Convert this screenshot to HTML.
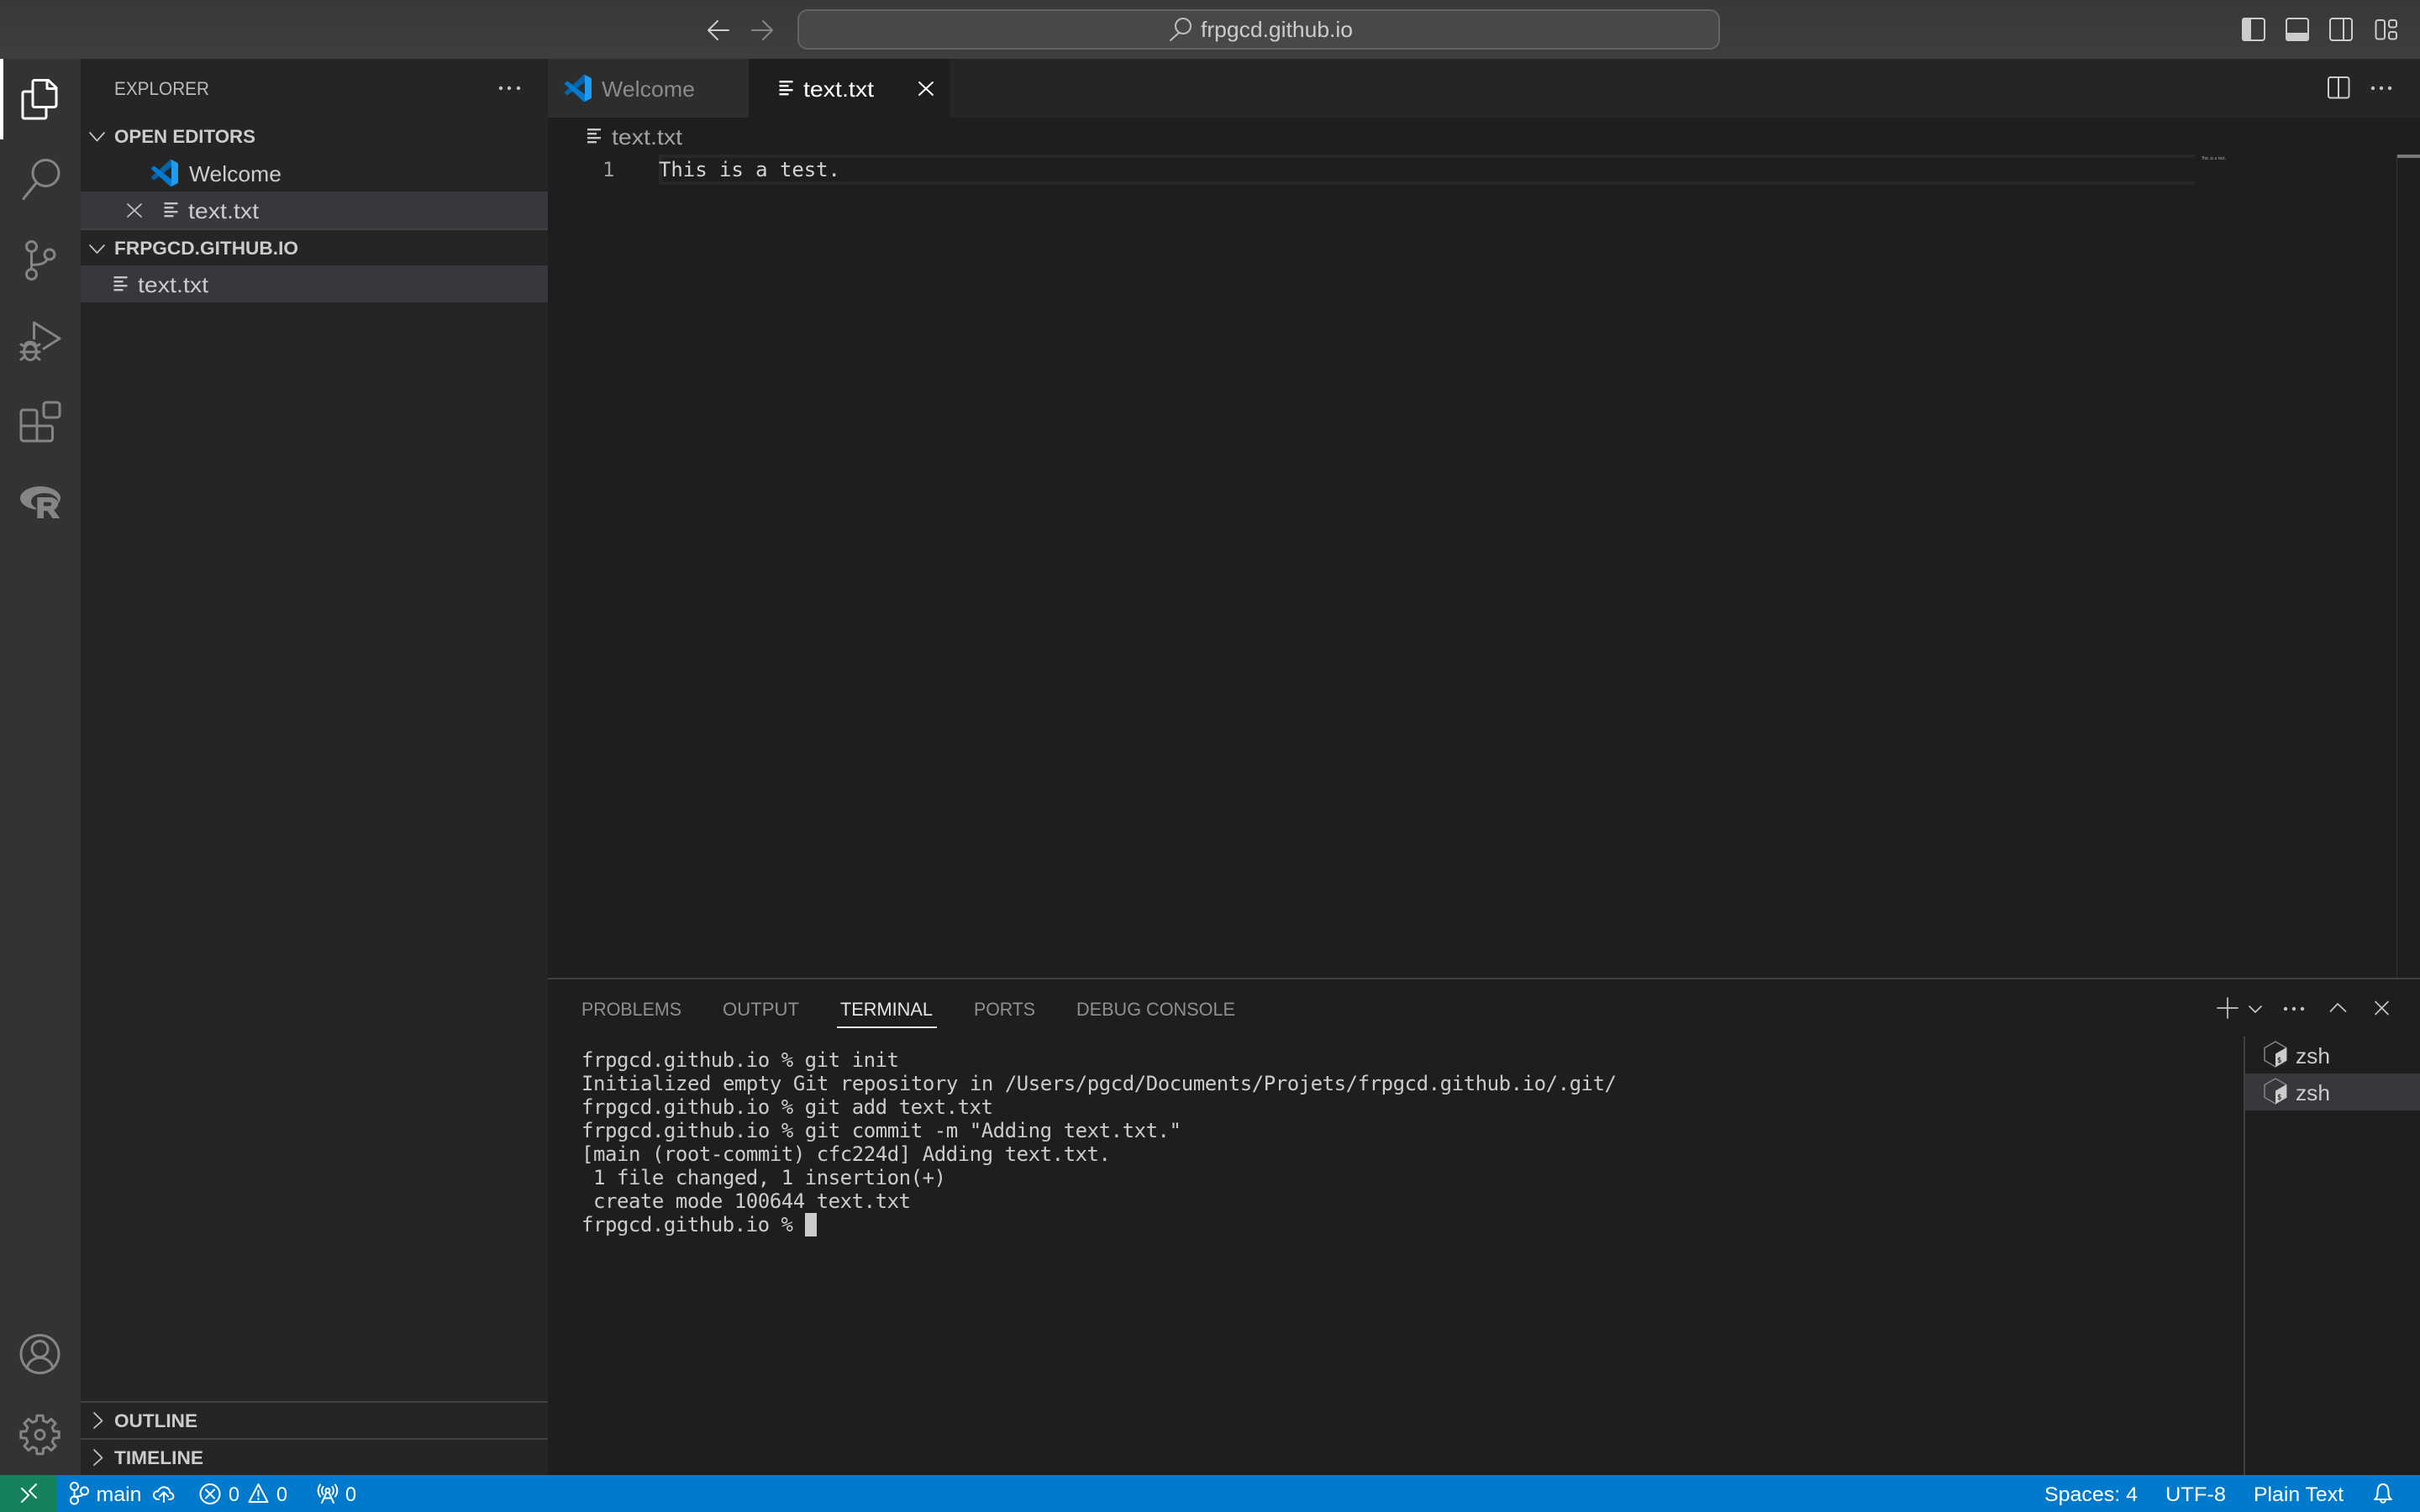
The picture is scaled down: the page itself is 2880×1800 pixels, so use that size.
<!DOCTYPE html>
<html lang="en"><head><meta charset="utf-8"><title>frpgcd.github.io</title>
<style>
html,body{margin:0;padding:0;background:#1e1e1e;width:2880px;height:1800px;overflow:hidden}
svg{display:block}
.s{font-family:"Liberation Sans",sans-serif;font-size:26px;fill:#ccc}
.b{font-family:"Liberation Sans",sans-serif;font-size:22px;font-weight:700;fill:#ccc}
.u{font-family:"Liberation Sans",sans-serif;font-size:22px;fill:#8f8f8f}
.m{font-family:"DejaVu Sans Mono","Liberation Mono",monospace;font-size:24px;fill:#ccc}
.w{font-family:"Liberation Sans",sans-serif;font-size:24px;fill:#fff}
.ic{fill:none;stroke:#858585;stroke-width:3;stroke-linecap:round;stroke-linejoin:round}
.th{fill:none;stroke:#c5c5c5;stroke-width:1.7;stroke-linecap:round;stroke-linejoin:round}
.wi{fill:none;stroke:#fff;stroke-width:2;stroke-linecap:round;stroke-linejoin:round}
</style></head><body>
<svg xmlns="http://www.w3.org/2000/svg" width="2880" height="1800" viewBox="0 0 2880 1800">
<defs>
<linearGradient id="tb" x1="0" y1="0" x2="0" y2="1"><stop offset="0" stop-color="#383838"/><stop offset="1" stop-color="#3e3e3e"/></linearGradient>
<g id="lines"><rect x="0" y="0" width="16" height="2.4"/><rect x="0" y="5" width="11" height="2.4"/><rect x="0" y="10" width="16" height="2.4"/><rect x="0" y="15" width="11" height="2.4"/></g>
<g id="vsc">
<path fill="#0065A9" d="M96.46 10.8L75.86.9a6.24 6.24 0 0 0-7.1 1.2L1.35 63.58a4.16 4.16 0 0 0 0 6.17l5.5 5a4.17 4.17 0 0 0 5.32.24L93.3 13.3c2.73-2.07 6.65-.12 6.65 3.3v-.24a6.25 6.25 0 0 0-3.54-5.56z"/>
<path fill="#007ACC" d="M96.46 89.2l-20.6 9.92a6.24 6.24 0 0 1-7.1-1.2L1.35 36.42a4.16 4.16 0 0 1 0-6.17l5.5-5a4.17 4.17 0 0 1 5.32-.24L93.3 86.7c2.73 2.07 6.65.12 6.65-3.3v.24a6.25 6.25 0 0 1-3.54 5.56z"/>
<path fill="#1F9CF0" d="M75.86 99.13a6.24 6.24 0 0 1-7.1-1.21c2.3 2.3 6.24.67 6.24-2.59V4.67c0-3.26-3.94-4.89-6.24-2.59a6.24 6.24 0 0 1 7.1-1.2L96.46 10.8A6.25 6.25 0 0 1 100 16.4v67.17a6.25 6.25 0 0 1-3.54 5.63z"/>
</g>
<g id="hex">
<polygon points="13,0 26,7.5 26,22.5 13,30 0,22.5 0,7.5" fill="none" stroke="#8a8a8a" stroke-width="1.4"/>
<polygon points="13,14.5 26,7 26,22.5 13,30" fill="#ccc"/>
<text x="15" y="25" font-family="DejaVu Sans Mono,monospace" font-size="9" font-weight="700" fill="#333">$_</text>
</g>
</defs>

<!-- regions -->
<rect width="2880" height="1800" fill="#1e1e1e"/>
<rect width="2880" height="70" fill="url(#tb)"/>
<rect y="70" width="96" height="1686" fill="#333333"/>
<rect x="96" y="70" width="556" height="1686" fill="#252526"/>
<rect x="652" y="70" width="2228" height="70" fill="#252526"/>
<rect x="652" y="70" width="239" height="70" fill="#2d2d2d"/>
<rect x="891" y="70" width="239" height="70" fill="#1e1e1e"/>
<rect y="1756" width="2880" height="44" fill="#007acc"/>
<rect y="1756" width="68" height="44" fill="#16825d"/>

<!-- title bar -->
<path d="M867 36H843M854 25L843 36L854 47" fill="none" stroke="#cfcfcf" stroke-width="2" stroke-linecap="round" stroke-linejoin="round"/>
<path d="M895 36H919M908 25L919 36L908 47" fill="none" stroke="#858585" stroke-width="2" stroke-linecap="round" stroke-linejoin="round"/>
<rect x="950" y="12" width="1096" height="46" rx="11" fill="#484848" stroke="#636363" stroke-width="2"/>
<circle cx="1408" cy="31" r="9" fill="none" stroke="#bdbdbd" stroke-width="2"/>
<path d="M1403 39L1393 48" stroke="#bdbdbd" stroke-width="2" stroke-linecap="round"/>
<text class="s" x="1429" y="44" textLength="181" lengthAdjust="spacingAndGlyphs" fill="#cfcfcf">frpgcd.github.io</text>

<g fill="none" stroke="#cccccc" stroke-width="2">
<rect x="2669" y="22" width="26" height="26" rx="3"/>
<rect x="2721" y="22" width="26" height="26" rx="3"/>
<rect x="2773" y="22" width="26" height="26" rx="3"/>
<path d="M2789 22V48"/>
<rect x="2827.5" y="24" width="10.5" height="22.5" rx="2.5"/>
<rect x="2843" y="24" width="9" height="8.5" rx="2.5"/>
<rect x="2843" y="38" width="9" height="8.5" rx="2.5"/>
<rect x="2771" y="92" width="24.5" height="24.5" rx="2.5"/>
<path d="M2783 92V116.500"/>
</g>
<path d="M2671 21h8v28h-8a3 3 0 0 1-3-3V24a3 3 0 0 1 3-3z" fill="#cccccc"/>
<path d="M2720 39h28v7a3 3 0 0 1-3 3h-22a3 3 0 0 1-3-3z" fill="#cccccc"/>

<!-- activity bar -->
<rect x="0" y="70" width="4" height="96" fill="#ffffff"/>
<g fill="none" stroke="#fff" stroke-width="3" stroke-linejoin="round">
<path d="M41 95.500H57.500L67 104.500V125a3 3 0 0 1-2.500 2.500H41a2 2 0 0 1-2-2V97.500a2 2 0 0 1 2-2z"/>
<path d="M56 95.500V105.500H67"/>
<path d="M39 109H29a2 2 0 0 0-2 2V139a2 2 0 0 0 2 2H53a2 2 0 0 0 2-2V128"/>
</g>
<circle class="ic" cx="54.500" cy="206" r="15.500"/>
<path class="ic" d="M43 218L28 236.500"/>
<g class="ic">
<circle cx="37.500" cy="293.500" r="6"/><circle cx="59" cy="303" r="6"/><circle cx="37.500" cy="326.500" r="6"/>
<path d="M37.500 299.500V320.500"/><path d="M56 308.500C54 314 48 315 37.500 315.500"/>
</g>
<g class="ic">
<path d="M40.500 403V384L71 403L52 415"/>
<ellipse cx="36" cy="419" rx="7.500" ry="9.500"/>
<path d="M30 410.500C31 406 41 406 42 410.500"/>
<path d="M25 410L30 413M47 410L42 413M25 419H47M25 428L30 424M47 428L42 424"/>
</g>
<g class="ic">
<rect x="52" y="479" width="19" height="18" rx="3"/>
<path d="M27 488H41a3 3 0 0 1 3 3V525M25 507H60a3 3 0 0 1 2.500 2.500V522a3 3 0 0 1-3 3H28a3 3 0 0 1-3-3V491a3 3 0 0 1 2-3"/>
</g>
<path fill="#858585" fill-rule="evenodd" d="M24 593a24 14 0 1 0 48 0a24 14 0 1 0-48 0zM37 597a16 10 0 1 0 32 0a16 10 0 1 0-32 0z"/>
<rect x="43" y="600" width="30" height="16" fill="#333333"/>
<text x="43" y="616" font-family="Liberation Sans,sans-serif" font-weight="700" font-size="33" fill="#858585" stroke="#858585" stroke-width="2" textLength="27" lengthAdjust="spacingAndGlyphs">R</text>
<g class="ic">
<circle cx="47.500" cy="1612" r="22.500"/>
<circle cx="47.500" cy="1606" r="9.500"/>
<path d="M32 1629C34 1620 41 1616.500 47.500 1616.500C54 1616.500 61 1620 63 1629"/>
</g>
<g class="ic" transform="translate(47.500 1708)">
<polygon points="-4.100,-16.500 -3.600,-22.700 3.600,-22.700 4.100,-16.500 8.800,-14.600 13.500,-18.600 18.600,-13.500 14.600,-8.800 16.500,-4.100 22.700,-3.600 22.700,3.600 16.500,4.100 14.600,8.800 18.600,13.500 13.500,18.600 8.800,14.600 4.100,16.500 3.600,22.700 -3.600,22.700 -4.100,16.500 -8.800,14.600 -13.500,18.600 -18.600,13.500 -14.600,8.800 -16.500,4.100 -22.700,3.600 -22.700,-3.600 -16.500,-4.100 -14.600,-8.800 -18.600,-13.500 -13.500,-18.600 -8.800,-14.600"/>
<circle r="5.500"/>
</g>

<!-- sidebar -->
<text class="u" x="136" y="113" textLength="113" lengthAdjust="spacingAndGlyphs" style="fill:#bbbbbb">EXPLORER</text>
<g fill="#c5c5c5"><circle cx="596" cy="105" r="2.200"/><circle cx="606" cy="105" r="2.200"/><circle cx="617" cy="105" r="2.200"/></g>
<rect x="96" y="228" width="556" height="44" fill="#37373d"/>
<rect x="96" y="272" width="556" height="2" fill="#414141"/>
<rect x="96" y="316" width="556" height="44" fill="#37373d"/>
<rect x="96" y="1668" width="556" height="2" fill="#414141"/>
<rect x="96" y="1712" width="556" height="2" fill="#414141"/>
<path class="th" d="M107 158L115.500 167.500L124 158"/>
<path class="th" d="M107 292L115.500 301L124 292"/>
<path class="th" d="M112 1682L121.500 1691.500L112 1700"/>
<path class="th" d="M112 1726L121.500 1735.500L112 1744"/>
<text class="b" x="136" y="170" textLength="168" lengthAdjust="spacingAndGlyphs">OPEN EDITORS</text>
<text class="b" x="136" y="303" textLength="219" lengthAdjust="spacingAndGlyphs">FRPGCD.GITHUB.IO</text>
<text class="b" x="136" y="1699" textLength="99" lengthAdjust="spacingAndGlyphs">OUTLINE</text>
<text class="b" x="136" y="1743" textLength="106" lengthAdjust="spacingAndGlyphs">TIMELINE</text>
<use href="#vsc" transform="translate(180 190) scale(.32)"/>
<text class="s" x="225" y="216" textLength="110" lengthAdjust="spacingAndGlyphs">Welcome</text>
<path class="th" d="M152 243L168 258M168 243L152 258"/>
<use href="#lines" x="195.500" y="241" fill="#c5c5c5"/>
<text class="s" x="224" y="260" textLength="84" lengthAdjust="spacingAndGlyphs">text.txt</text>
<use href="#lines" x="135.500" y="329" fill="#c5c5c5"/>
<text class="s" x="164" y="348" textLength="84" lengthAdjust="spacingAndGlyphs">text.txt</text>

<!-- tabs -->
<use href="#vsc" transform="translate(672 89) scale(.32)"/>
<text class="s" x="716" y="115" textLength="111" lengthAdjust="spacingAndGlyphs" style="fill:#8b8b8b">Welcome</text>
<use href="#lines" x="927.500" y="96" fill="#ffffff"/>
<text class="s" x="956" y="115" textLength="84" lengthAdjust="spacingAndGlyphs" style="fill:#ffffff">text.txt</text>
<path class="wi" d="M1094 98L1110 113M1110 98L1094 113"/>
<g fill="#c5c5c5"><circle cx="2824" cy="105" r="2.200"/><circle cx="2834" cy="105" r="2.200"/><circle cx="2844" cy="105" r="2.200"/></g>

<!-- breadcrumb + editor -->
<use href="#lines" x="699" y="153" fill="#c5c5c5"/>
<text class="s" x="728" y="172" textLength="84" lengthAdjust="spacingAndGlyphs" style="fill:#a3a3a3">text.txt</text>
<rect x="784" y="184" width="1828" height="4" fill="#282828"/>
<rect x="784" y="216" width="1828" height="4" fill="#282828"/>
<rect x="784" y="188" width="4" height="28" fill="#282828"/>
<text class="m" x="717" y="210" style="fill:#a0a0a0">1</text>
<text class="m" x="784" y="210" textLength="216" style="fill:#d4d4d4">This is a test.</text>
<text x="2620" y="190" font-family="DejaVu Sans Mono,monospace" font-size="5" fill="#9a9a9a" textLength="30">This is a test.</text>
<rect x="2852" y="184" width="1" height="980" fill="#333333"/>
<rect x="2853" y="184" width="27" height="4" fill="#7a7a7a"/>

<!-- panel -->
<rect x="652" y="1164" width="2228" height="2" fill="#414141"/>
<text class="u" x="692" y="1209" textLength="119" lengthAdjust="spacingAndGlyphs">PROBLEMS</text>
<text class="u" x="860" y="1209" textLength="91" lengthAdjust="spacingAndGlyphs">OUTPUT</text>
<text class="u" x="1000" y="1209" textLength="110" lengthAdjust="spacingAndGlyphs" style="fill:#e7e7e7">TERMINAL</text>
<text class="u" x="1159" y="1209" textLength="73" lengthAdjust="spacingAndGlyphs">PORTS</text>
<text class="u" x="1281" y="1209" textLength="189" lengthAdjust="spacingAndGlyphs">DEBUG CONSOLE</text>
<rect x="996" y="1222" width="119" height="2" fill="#e7e7e7"/>
<g class="m">
<text x="692" y="1270" textLength="378">frpgcd.github.io % git init</text>
<text x="692" y="1298" textLength="1232">Initialized empty Git repository in /Users/pgcd/Documents/Projets/frpgcd.github.io/.git/</text>
<text x="692" y="1326" textLength="490">frpgcd.github.io % git add text.txt</text>
<text x="692" y="1354" textLength="714">frpgcd.github.io % git commit -m "Adding text.txt."</text>
<text x="692" y="1382" textLength="630">[main (root-commit) cfc224d] Adding text.txt.</text>
<text x="706" y="1410" textLength="420">1 file changed, 1 insertion(+)</text>
<text x="706" y="1438" textLength="378">create mode 100644 text.txt</text>
<text x="692" y="1466" textLength="252">frpgcd.github.io %</text>
</g>
<rect x="958" y="1444" width="14" height="28" fill="#cccccc"/>

<path class="th" d="M2651 1188V1212M2639 1200H2663"/>
<path class="th" d="M2677 1198L2684 1205L2691 1198"/>
<g fill="#c5c5c5"><circle cx="2720" cy="1201" r="2.200"/><circle cx="2730" cy="1201" r="2.200"/><circle cx="2740" cy="1201" r="2.200"/></g>
<path class="th" d="M2773.500 1204L2782 1195L2791.500 1204"/>
<path class="th" d="M2827 1192.500L2842 1207.500M2842 1192.500L2827 1207.500"/>

<rect x="2670" y="1234" width="2" height="522" fill="#414141"/>
<rect x="2672" y="1278" width="208" height="44" fill="#37373d"/>
<use href="#hex" x="2695" y="1240"/>
<use href="#hex" x="2695" y="1284"/>
<text class="s" x="2732" y="1266" textLength="41" lengthAdjust="spacingAndGlyphs">zsh</text>
<text class="s" x="2732" y="1310" textLength="41" lengthAdjust="spacingAndGlyphs">zsh</text>

<!-- status bar -->
<path class="wi" d="M26 1772L34 1780L26 1788M43 1767L35 1775L43 1783"/>
<g class="wi">
<circle cx="88.500" cy="1769.500" r="4.500"/><circle cx="100.500" cy="1775" r="4.500"/><circle cx="88.500" cy="1786" r="4.500"/>
<path d="M88.500 1774V1781.500M98.500 1779C97 1782 92 1781 88.500 1782"/>
</g>
<text class="w" x="114.500" y="1787" textLength="54" lengthAdjust="spacingAndGlyphs">main</text>
<path class="wi" d="M189 1785C184 1785 182.500 1781 183 1779C183.500 1776 186 1775 188 1775.500C190 1771 194 1769.500 198 1771C201 1772 202.500 1775 202 1777C206 1777.500 207 1781 206 1783C205 1785 203 1785 201 1785M195 1788V1777M190 1781.500L195 1776.500L200 1781.500"/>
<circle class="wi" cx="250" cy="1778.500" r="11.500"/>
<path class="wi" d="M245 1773.500L255 1783.500M255 1773.500L245 1783.500"/>
<text class="w" x="272" y="1787" textLength="13" lengthAdjust="spacingAndGlyphs">0</text>
<path class="wi" d="M307.500 1767L318.500 1788H296.500ZM307.500 1774.500V1781M307.500 1784V1785"/>
<text class="w" x="329" y="1787" textLength="13" lengthAdjust="spacingAndGlyphs">0</text>
<g class="wi">
<circle cx="390" cy="1774.500" r="2.500"/>
<path d="M388.500 1777L383 1789M391.500 1777L397 1789M385.500 1783.500H394.500"/>
<path d="M384.500 1770C382.500 1773 382.500 1776 384.500 1779M395.500 1770C397.500 1773 397.500 1776 395.500 1779M381 1767.500C378 1772 378 1777 381 1781.500M399 1767.500C402 1772 402 1777 399 1781.500"/>
</g>
<text class="w" x="411" y="1787" textLength="13" lengthAdjust="spacingAndGlyphs">0</text>
<text class="w" x="2433" y="1787" textLength="111" lengthAdjust="spacingAndGlyphs">Spaces: 4</text>
<text class="w" x="2577" y="1787" textLength="72" lengthAdjust="spacingAndGlyphs">UTF-8</text>
<text class="w" x="2682" y="1787" textLength="107" lengthAdjust="spacingAndGlyphs">Plain Text</text>
<path class="wi" d="M2826 1785C2829 1783 2829.500 1781 2829.500 1777C2829.500 1770 2832 1767 2836 1767C2840 1767 2842.500 1770 2842.500 1777C2842.500 1781 2843 1783 2846 1785ZM2833 1785C2833 1790 2839 1790 2839 1785"/>
</svg>
</body></html>
